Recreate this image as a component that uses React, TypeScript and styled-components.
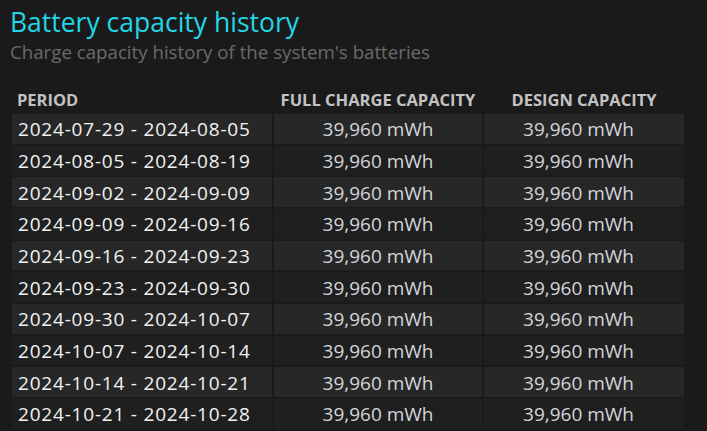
import React from "react";
import styled, { createGlobalStyle } from "styled-components";

const Global = createGlobalStyle`
  html, body {
    margin: 0;
    padding: 0;
    background: #1a1a1a;
  }
  body {
    font-family: "Open Sans", "Noto Sans", "Liberation Sans", sans-serif;
  }
`;

const Page = styled.div`
  padding: 6px 10px 0 10px;
  height: 431px;
  box-sizing: border-box;
  overflow: hidden;
`;

const Title = styled.h1`
  margin: 0;
  font-size: 26.5px;
  font-weight: 400;
  line-height: 32px;
  color: #22d6e8;
`;

const Subtitle = styled.div`
  margin: 0;
  font-size: 18.7px;
  line-height: 28px;
  color: #6a6a6a;
`;

const Table = styled.table`
  margin-top: 18px;
  border-collapse: separate;
  border-spacing: 2px;
`;

const Th = styled.th<{ $align?: "left" | "center" }>`
  font-size: 16.5px;
  font-weight: 700;
  line-height: 20px;
  color: #c2c2c2;
  text-align: ${(p) => p.$align ?? "center"};
  padding: ${(p) => (p.$align === "left" ? "0 4px 2px 5px" : "0 0 2px 0")};
  height: 26px;
  box-sizing: border-box;
  vertical-align: bottom;
  white-space: nowrap;
`;

const Td = styled.td<{ $odd: boolean; $kind: "date" | "num"; $w: number; $shift?: number }>`
  width: ${(p) => p.$w}px;
  min-width: ${(p) => p.$w}px;
  max-width: ${(p) => p.$w}px;
  box-sizing: border-box;
  height: 29.67px;
  padding: 1px ${(p) => p.$shift ?? 0}px 0 ${(p) => (p.$kind === "date" ? 6 : 0)}px;
  background: ${(p) => (p.$odd ? "#272727" : "#1f1f1f")};
  color: ${(p) => (p.$kind === "date" ? "#f2f2f2" : "#d2d5da")};
  text-align: ${(p) => (p.$kind === "date" ? "left" : "center")};
  font-size: 19px;
  letter-spacing: ${(p) => (p.$kind === "date" ? "0.8px" : "0")};
  line-height: 20px;
  white-space: nowrap;
  vertical-align: middle;
`;

const rows = [
  "2024-07-29 - 2024-08-05",
  "2024-08-05 - 2024-08-19",
  "2024-09-02 - 2024-09-09",
  "2024-09-09 - 2024-09-16",
  "2024-09-16 - 2024-09-23",
  "2024-09-23 - 2024-09-30",
  "2024-09-30 - 2024-10-07",
  "2024-10-07 - 2024-10-14",
  "2024-10-14 - 2024-10-21",
  "2024-10-21 - 2024-10-28",
];

export default function App() {
  return (
    <>
      <Global />
      <Page>
        <Title>Battery capacity history</Title>
        <Subtitle>Charge capacity history of the system's batteries</Subtitle>
        <Table>
          <thead>
            <tr>
              <Th $align="left">PERIOD</Th>
              <Th>FULL CHARGE CAPACITY</Th>
              <Th>DESIGN CAPACITY</Th>
            </tr>
          </thead>
          <tbody>
            {rows.map((r, i) => (
              <tr key={r}>
                <Td $odd={i % 2 === 0} $kind="date" $w={260}>
                  {r}
                </Td>
                <Td $odd={i % 2 === 0} $kind="num" $w={208}>
                  39,960 mWh
                </Td>
                <Td $odd={i % 2 === 0} $kind="num" $w={200} $shift={11}>
                  39,960 mWh
                </Td>
              </tr>
            ))}
          </tbody>
        </Table>
      </Page>
    </>
  );
}
